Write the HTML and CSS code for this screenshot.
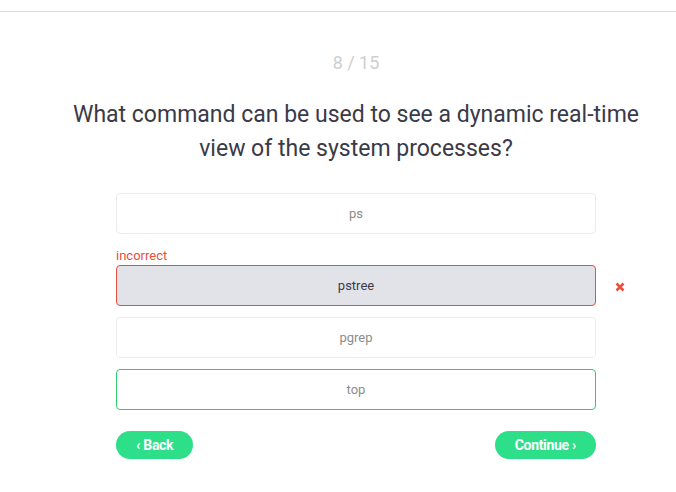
FILE: index.html
```html
<!DOCTYPE html>
<html>
<head>
<meta charset="utf-8">
<link rel="stylesheet" href="styles.css">
</head>
<body>
<div class="topbar"></div>
<main class="quiz">
  <div class="progress">8 / 15</div>
  <h1 class="question">What command can be used to see a dynamic real-time view of the system processes?</h1>
  <div class="options">
    <div class="option">ps</div>
    <div class="option-group">
      <div class="label-incorrect">incorrect</div>
      <div class="option-row">
        <div class="option option-wrong">pstree</div>
        <svg class="mark" width="10" height="10" viewBox="0 0 10 10"><path d="M1.5 1.5L8.5 8.5M8.5 1.5L1.5 8.5" stroke="#e8503e" stroke-width="2.6" stroke-linecap="butt"/></svg>
      </div>
    </div>
    <div class="option">pgrep</div>
    <div class="option option-right">top</div>
  </div>
  <div class="nav">
    <button class="btn">‹ Back</button>
    <button class="btn">Continue ›</button>
  </div>
</main>
</body>
</html>
```
FILE: styles.css
```css
html, body {
  margin: 0;
  padding: 0;
  background: #fff;
  font-family: Roboto, "Noto Sans", sans-serif;
}
.topbar {
  height: 11px;
  border-bottom: 1px solid #dcdcdc;
}
.quiz {
  margin-left: 36px;
  display: flex;
  flex-direction: column;
  align-items: center;
}
.progress {
  margin-top: 40px;
  font-size: 18px;
  line-height: 22px;
  color: #cfcfcf;
}
.question {
  margin: 24px 0 0;
  font-size: 23px;
  line-height: 34px;
  font-weight: 400;
  color: #3a3a48;
  text-align: center;
  width: 580px;
}
.options {
  margin-top: 27px;
  width: 480px;
  display: flex;
  flex-direction: column;
  gap: 11px;
}
.option {
  box-sizing: border-box;
  height: 41px;
  border: 1px solid #ececec;
  border-radius: 4px;
  display: flex;
  align-items: center;
  justify-content: center;
  font-size: 13px;
  color: #8c8c8c;
  background: #fff;
}
.option-group {
  display: flex;
  flex-direction: column;
}
.label-incorrect {
  font-size: 13px;
  line-height: 17px;
  color: #e8503e;
  padding-top: 2px;
  margin-bottom: 1px;
}
.option-row {
  position: relative;
}
.option-wrong {
  background: #e2e3e8;
  border-color: #e8503e;
  color: #3a3a48;
}
.mark {
  position: absolute;
  left: 499px;
  top: 17px;
}
.option-right {
  border-color: #2ecc71;
}
.nav {
  margin-top: 21px;
  width: 480px;
  display: flex;
  justify-content: space-between;
}
.btn {
  border: none;
  background: #2edf8a;
  color: #fff;
  font-family: Roboto, sans-serif;
  font-weight: 700;
  font-size: 14px;
  height: 28px;
  border-radius: 14px;
  padding: 0 20px;
  letter-spacing: -0.3px;
}
```
